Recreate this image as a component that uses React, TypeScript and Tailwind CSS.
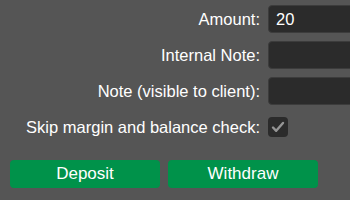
import React from "react";

function Field({ label, value }: { label: string; value?: string }) {
  return (
    <>
      <label className="text-right text-[16.5px] text-white leading-[28px] whitespace-nowrap">{label}</label>
      <div className="h-[28px] w-[200px] rounded-[4px] border border-[#3c3c3c] bg-[#2b2b2b] px-[7px] text-[16.5px] leading-[26px] text-white">
        {value}
      </div>
    </>
  );
}

export default function App() {
  return (
    <div
      className="h-[200px] w-[350px] overflow-hidden bg-[#555555] px-[10px] pt-[5px]"
      style={{ fontFamily: '"Liberation Sans", Arial, sans-serif' }}
    >
      <div className="grid grid-cols-[250px_auto] gap-x-[8px] gap-y-[8px] items-center">
        <Field label="Amount:" value="20" />
        <Field label="Internal Note:" />
        <Field label="Note (visible to client):" />
        <label className="text-right text-[16.5px] text-white leading-[28px] whitespace-nowrap">
          Skip margin and balance check:
        </label>
        <div className="flex h-[28px] items-center">
          <div className="flex h-[20px] w-[20px] items-center justify-center rounded-[4px] bg-[#2b2b2b]">
            <svg width="16" height="16" viewBox="0 0 16 16" fill="none">
              <path d="M3 8.5l3.2 3.3L13 4" stroke="#959595" strokeWidth="2.4" strokeLinecap="round" strokeLinejoin="round" />
            </svg>
          </div>
        </div>
      </div>
      <div className="mt-[19px] flex gap-[8px]">
        <button className="h-[28px] w-[150px] rounded-[4px] bg-[#00924a] text-[17px] text-white">Deposit</button>
        <button className="h-[28px] w-[150px] rounded-[4px] bg-[#00924a] text-[17px] text-white">Withdraw</button>
      </div>
    </div>
  );
}
